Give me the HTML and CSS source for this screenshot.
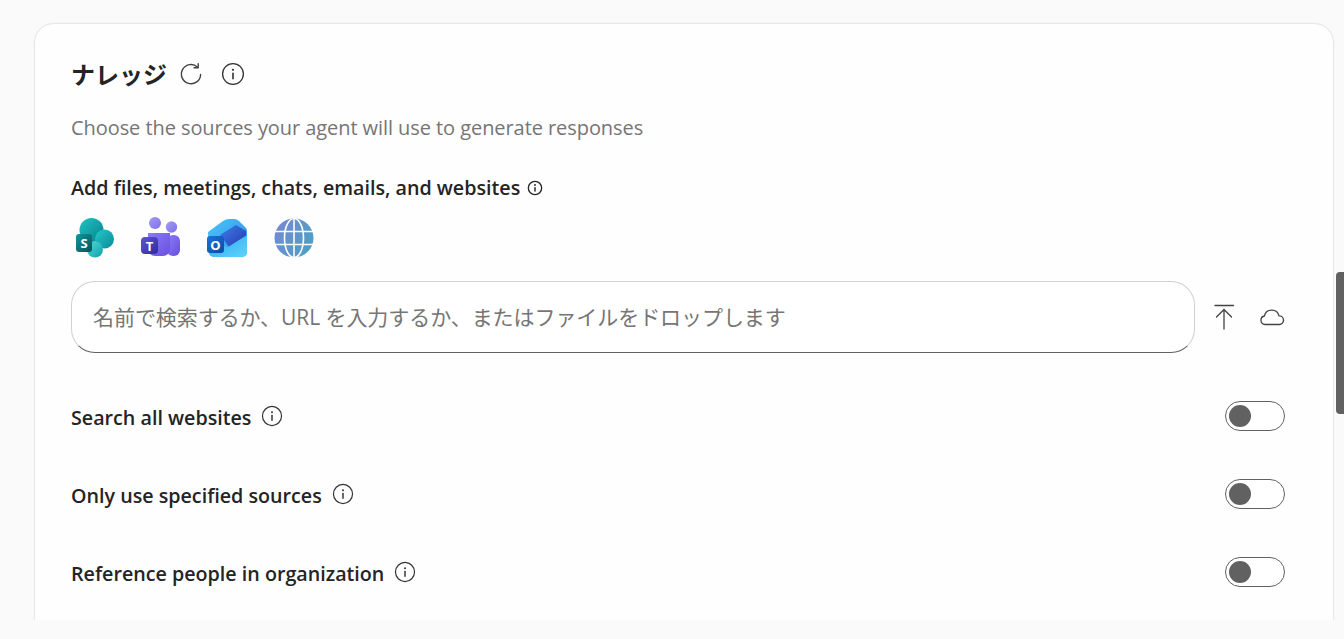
FILE: index.html
```html
<!DOCTYPE html>
<html lang="ja">
<head>
    <meta charset="UTF-8">
    <title>Knowledge</title>
    <link rel="stylesheet" href="styles.css">
</head>
<body>
    <div class="viewport">
        <div class="card">
            <div class="title-row">
                <h2 class="title">ナレッジ</h2>
                <svg class="refresh-icon" width="24" height="24" viewBox="0 0 24 24" fill="none" stroke="#424242" stroke-width="1.4" stroke-linecap="round" stroke-linejoin="round">
                    <path d="M18.6 5.2A9.6 9.6 0 1 0 21.6 12.4"/>
                    <path d="M19.2 1.6v4.2h-4.2"/>
                </svg>
                <svg class="info-icon" width="24" height="24" viewBox="0 0 24 24">
                    <use href="#info"/>
                </svg>
            </div>
            <p class="subtitle">Choose the sources your agent will use to generate responses</p>

            <div class="section-label">
                <span>Add files, meetings, chats, emails, and websites</span>
                <svg width="16" height="16" viewBox="0 0 24 24"><use href="#info-small"/></svg>
            </div>

            <div class="sources">
                <!-- SharePoint -->
                <svg width="42" height="42" viewBox="0 0 42 42">
                    <defs>
                        <linearGradient id="sp1" x1="0" y1="0" x2="1" y2="1"><stop offset="0" stop-color="#1fc4c4"/><stop offset="1" stop-color="#07808c"/></linearGradient>
                        <linearGradient id="sp2" x1="0" y1="0" x2="1" y2="1"><stop offset="0" stop-color="#22c8c6"/><stop offset="1" stop-color="#0c8a99"/></linearGradient>
                        <linearGradient id="sp3" x1="0" y1="0" x2="1" y2="1"><stop offset="0" stop-color="#4fdcd4"/><stop offset="1" stop-color="#10a0ad"/></linearGradient>
                        <linearGradient id="sp4" x1="0" y1="0" x2="1" y2="1"><stop offset="0" stop-color="#12989a"/><stop offset="1" stop-color="#07505c"/></linearGradient>
                    </defs>
                    <circle cx="17.5" cy="13" r="12" fill="url(#sp1)"/>
                    <circle cx="30.500" cy="22" r="9.500" fill="url(#sp2)"/>
                    <circle cx="21" cy="32.500" r="8" fill="url(#sp3)"/>
                    <rect x="2" y="17" width="16" height="18" rx="3" fill="url(#sp4)"/>
                    <text x="10" y="31" class="app-letter">S</text>
                </svg>
                <!-- Teams -->
                <svg width="42" height="42" viewBox="0 0 42 42">
                    <defs>
                        <linearGradient id="tm1" x1="0" y1="0" x2="1" y2="1"><stop offset="0" stop-color="#a79bf5"/><stop offset="1" stop-color="#7c6fe6"/></linearGradient>
                        <linearGradient id="tm2" x1="0" y1="0" x2="1" y2="1"><stop offset="0" stop-color="#8a7cf5"/><stop offset="1" stop-color="#6a4fe0"/></linearGradient>
                        <linearGradient id="tm3" x1="0" y1="0" x2="1" y2="1"><stop offset="0" stop-color="#6058d2"/><stop offset="1" stop-color="#2e2a9b"/></linearGradient>
                    </defs>
                    <circle cx="15" cy="6" r="6" fill="url(#tm1)"/>
                    <circle cx="31.500" cy="10" r="5.700" fill="url(#tm1)"/>
                    <rect x="27" y="18" width="13" height="21" rx="6" fill="url(#tm2)"/>
                    <path d="M8 16h22v16a7 7 0 0 1-7 7h-8a7 7 0 0 1-7-7z" fill="url(#tm2)"/>
                    <rect x="1" y="20" width="17" height="17" rx="4" fill="url(#tm3)"/>
                    <text x="9.500" y="33.500" class="app-letter">T</text>
                </svg>
                <!-- Outlook -->
                <svg width="42" height="42" viewBox="0 0 42 42">
                    <defs>
                        <linearGradient id="ol1" x1="0" y1="0" x2="1" y2="1"><stop offset="0" stop-color="#4cc6f7"/><stop offset="1" stop-color="#2a8af0"/></linearGradient>
                        <linearGradient id="ol2" x1="0" y1="0" x2="1" y2="1"><stop offset="0" stop-color="#3a80e8"/><stop offset="1" stop-color="#2a36b0"/></linearGradient>
                        <linearGradient id="ol3" x1="0" y1="0" x2="1" y2="1"><stop offset="0" stop-color="#2da4f3"/><stop offset="1" stop-color="#5ed4fa"/></linearGradient>
                        <linearGradient id="ol4" x1="0" y1="0" x2="1" y2="1"><stop offset="0" stop-color="#1a73d8"/><stop offset="1" stop-color="#0c4aa8"/></linearGradient>
                    </defs>
                    <path d="M2 15 17 4q3-2 6-2h5q3 0 5 2l7 7q1 1 1 3v21a5 5 0 0 1-5 5H8a5 5 0 0 1-5-5z" fill="url(#ol1)"/>
                    <path d="M14 18 30 8l10 6v6L24 31z" fill="url(#ol2)"/>
                    <path d="M3 24l19 6 19-12v17a5 5 0 0 1-5 5H8a5 5 0 0 1-5-5z" fill="url(#ol3)"/>
                    <rect x="1" y="19" width="17" height="17" rx="3" fill="url(#ol4)"/>
                    <text x="9.500" y="32.500" class="app-letter">O</text>
                </svg>
                <!-- Web -->
                <svg width="42" height="42" viewBox="0 0 42 42">
                    <defs>
                        <linearGradient id="gb1" x1="0" y1="0" x2="1" y2="0.6"><stop offset="0" stop-color="#7a86d8"/><stop offset="1" stop-color="#4f9fc4"/></linearGradient>
                    </defs>
                    <circle cx="22" cy="21" r="19.500" fill="url(#gb1)"/>
                    <g fill="none" stroke="#fdfdfd" stroke-width="1.600">
                        <ellipse cx="22" cy="21" rx="9.500" ry="19.500"/>
                        <path d="M22 1v40M3 14.500h38M3 27.500h38"/>
                    </g>
                </svg>
            </div>

            <div class="search-row">
                <div class="search-box">名前で検索するか、URL を入力するか、またはファイルをドロップします</div>
                <svg class="upload-icon" width="22" height="26" viewBox="0 0 22 26" fill="none" stroke="#424242" stroke-width="1.3" stroke-linecap="round" stroke-linejoin="round">
                    <path d="M2 1.500h18.500"/>
                    <path d="M11 25V5.500M3.500 13 11 5.500 18.500 13"/>
                </svg>
                <svg class="cloud-icon" width="26" height="20" viewBox="0 0 26 20" fill="none" stroke="#424242" stroke-width="1.3" stroke-linejoin="round">
                    <path d="M6 17.500a4.300 4.300 0 0 1-.6-8.500 7.500 7.500 0 0 1 14.600-.1 4.300 4.300 0 0 1 .4 8.600z"/>
                </svg>
            </div>

            <div class="toggle-row">
                <span class="toggle-label">Search all websites</span>
                <svg width="22" height="22" viewBox="0 0 24 24"><use href="#info"/></svg>
                <span class="toggle"></span>
            </div>
            <div class="toggle-row">
                <span class="toggle-label">Only use specified sources</span>
                <svg width="22" height="22" viewBox="0 0 24 24"><use href="#info"/></svg>
                <span class="toggle"></span>
            </div>
            <div class="toggle-row">
                <span class="toggle-label">Reference people in organization</span>
                <svg width="22" height="22" viewBox="0 0 24 24"><use href="#info"/></svg>
                <span class="toggle"></span>
            </div>
        </div>
    </div>
    <div class="scroll-thumb"></div>

    <svg class="icon-defs" width="0" height="0">
        <symbol id="info" viewBox="0 0 24 24">
            <circle cx="12" cy="12" r="10.400" fill="none" stroke="#333" stroke-width="1.300"/>
            <rect x="11.200" y="10.500" width="1.600" height="7" rx=".8" fill="#333"/>
            <circle cx="12" cy="7.800" r="1.100" fill="#333"/>
        </symbol>
        <symbol id="info-small" viewBox="0 0 24 24">
            <circle cx="12" cy="12" r="10" fill="none" stroke="#242424" stroke-width="2"/>
            <rect x="10.900" y="10.500" width="2.200" height="7" rx="1" fill="#242424"/>
            <circle cx="12" cy="7.500" r="1.400" fill="#242424"/>
        </symbol>
    </svg>
</body>
</html>
```

FILE: styles.css
```css
body {
    margin: 0;
    background-color: #fafafa;
    font-family: "Open Sans", "Noto Sans CJK JP", sans-serif;
    color: #242424;
    overflow: hidden;
}
.viewport {
    height: 620px;
    overflow: hidden;
    padding: 23px 10px 0 34px;
    box-sizing: border-box;
}
.card {
    height: 700px;
    background-color: #fefefe;
    border: 1px solid #e8e8e8;
    border-radius: 20px;
    padding: 32px 48px 0 36px;
    box-sizing: border-box;
    box-shadow: 0 0 2px rgba(0, 0, 0, 0.06);
}
.title-row {
    display: flex;
    align-items: center;
    height: 36px;
}
.title {
    margin: 0;
    font-family: "Noto Sans CJK JP", sans-serif;
    font-size: 24px;
    font-weight: 700;
    line-height: 36px;
}
.refresh-icon {
    margin-left: 12px;
}
.info-icon {
    margin-left: 18px;
}
.subtitle {
    margin: 22px 0 0;
    font-size: 20px;
    letter-spacing: -0.07px;
    line-height: 28px;
    color: #757575;
}
.section-label {
    display: flex;
    align-items: center;
    gap: 7px;
    margin-top: 32px;
    font-size: 19.7px;
    font-weight: 600;
    line-height: 28px;
}
.sources {
    display: flex;
    gap: 24px;
    margin-top: 15px;
    padding-left: 3px;
    height: 42px;
}
.app-letter {
    font-family: "Open Sans", sans-serif;
    font-size: 13px;
    font-weight: 700;
    fill: #fff;
    text-anchor: middle;
}
.search-row {
    display: flex;
    align-items: center;
    margin-top: 22px;
}
.search-box {
    flex: 1;
    height: 72px;
    line-height: 70px;
    padding-left: 21px;
    box-sizing: border-box;
    background-color: #fff;
    border: 1px solid #d1d1d1;
    border-bottom-color: #616161;
    border-radius: 24px;
    font-size: 21px;
    letter-spacing: -0.06px;
    color: #757575;
}
.upload-icon {
    margin-left: 18px;
}
.cloud-icon {
    margin-left: 24px;
}
.toggle-row {
    display: flex;
    align-items: center;
    gap: 10px;
    height: 30px;
    margin-top: 48px;
    font-size: 19.7px;
    font-weight: 600;
}
.toggle-label {
    padding-top: 2px;
}
.toggle {
    position: relative;
    margin-left: auto;
    width: 60px;
    height: 30px;
    box-sizing: border-box;
    border: 1px solid #616161;
    border-radius: 15px;
    background-color: #fff;
}
.toggle::after {
    content: "";
    position: absolute;
    left: 3px;
    top: 3px;
    width: 22px;
    height: 22px;
    border-radius: 50%;
    background-color: #616161;
}
.scroll-thumb {
    position: absolute;
    right: 0;
    top: 272px;
    width: 8px;
    height: 142px;
    background-color: #616161;
    border-radius: 4px 0 0 4px;
}
.icon-defs {
    position: absolute;
}
```
